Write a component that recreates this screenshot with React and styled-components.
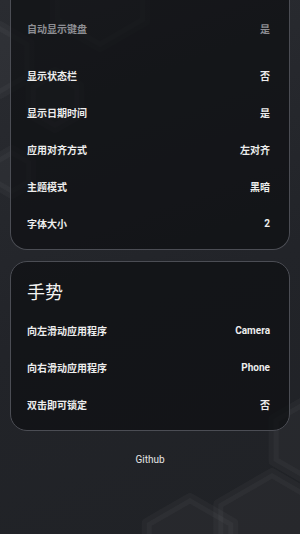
import styled, { createGlobalStyle } from "styled-components";

const GlobalStyle = createGlobalStyle`
  html, body {
    margin: 0;
    padding: 0;
    background: #24262b;
  }
  body {
    font-family: Roboto, "Noto Sans CJK SC", sans-serif;
    color: #ececec;
  }
`;

const Page = styled.div`
  position: relative;
  min-height: 534px;
  overflow: hidden;
  background: linear-gradient(160deg, #2a2c31 0%, #222429 55%, #202226 100%);
`;

const Backdrop = styled.svg`
  position: absolute;
  inset: 0;
  width: 300px;
  height: 534px;
  pointer-events: none;
`;

const Content = styled.div`
  position: relative;
  display: flex;
  flex-direction: column;
  gap: 11px;
  padding: 0 10px;
`;

const Card = styled.section`
  background: rgba(14, 15, 18, 0.72);
  border: 1px solid #4b4d54;
  border-radius: ${(p) => (p.$cut ? "0 0 17px 17px" : "17px")};
  border-top-width: ${(p) => (p.$cut ? "0" : "1px")};
  padding: ${(p) => (p.$cut ? "10px" : "18px")} 19px 7px 16px;
  display: flex;
  flex-direction: column;
`;

const Title = styled.h2`
  margin: 0 0 6px;
  font-size: 18px;
  line-height: 26px;
  font-weight: 400;
  color: #f2f2f2;
`;

const Row = styled.div`
  height: 37px;
  display: flex;
  align-items: center;
  justify-content: space-between;
  font-size: 10px;
  color: ${(p) => (p.$dim ? "#8d8e93" : "#ededed")};
  margin-bottom: ${(p) => (p.$dim ? "10px" : "0")};
`;

const Label = styled.span`
  font-weight: 600;
`;

const Value = styled.span`
  font-weight: 700;
`;

const Footer = styled.div`
  position: relative;
  margin-top: 22px;
  text-align: center;
  font-size: 10px;
  line-height: 14px;
  color: #e6e6e6;
`;

function hex(cx, cy, r) {
  const w = r * 0.866;
  return `M${cx},${cy - r} L${cx + w},${cy - r / 2} L${cx + w},${cy + r / 2} L${cx},${cy + r} L${cx - w},${cy + r / 2} L${cx - w},${cy - r / 2} Z`;
}

const shapes = [
  [100, -5, 52],
  [0, 60, 34],
  [55, 100, 28],
  [12, 172, 22],
  [310, 440, 42],
  [272, 535, 62],
  [190, 548, 50],
];

const display = [
  { label: "自动显示键盘", value: "是", dim: true },
  { label: "显示状态栏", value: "否" },
  { label: "显示日期时间", value: "是" },
  { label: "应用对齐方式", value: "左对齐" },
  { label: "主题模式", value: "黑暗" },
  { label: "字体大小", value: "2" },
];

const gestures = [
  { label: "向左滑动应用程序", value: "Camera" },
  { label: "向右滑动应用程序", value: "Phone" },
  { label: "双击即可锁定", value: "否" },
];

export default function App() {
  return (
    <Page>
      <GlobalStyle />
      <Backdrop viewBox="0 0 300 534">
        {shapes.map(([x, y, r], i) => (
          <path
            key={i}
            d={hex(x, y, r)}
            fill="rgba(255,255,255,0.03)"
            stroke="rgba(255,255,255,0.03)"
            strokeWidth="10"
            strokeLinejoin="round"
          />
        ))}
      </Backdrop>
      <Content>
        <Card $cut>
          {display.map((item) => (
            <Row key={item.label} $dim={item.dim}>
              <Label>{item.label}</Label>
              <Value>{item.value}</Value>
            </Row>
          ))}
        </Card>
        <Card>
          <Title>手势</Title>
          {gestures.map((item) => (
            <Row key={item.label}>
              <Label>{item.label}</Label>
              <Value>{item.value}</Value>
            </Row>
          ))}
        </Card>
      </Content>
      <Footer>Github</Footer>
    </Page>
  );
}
